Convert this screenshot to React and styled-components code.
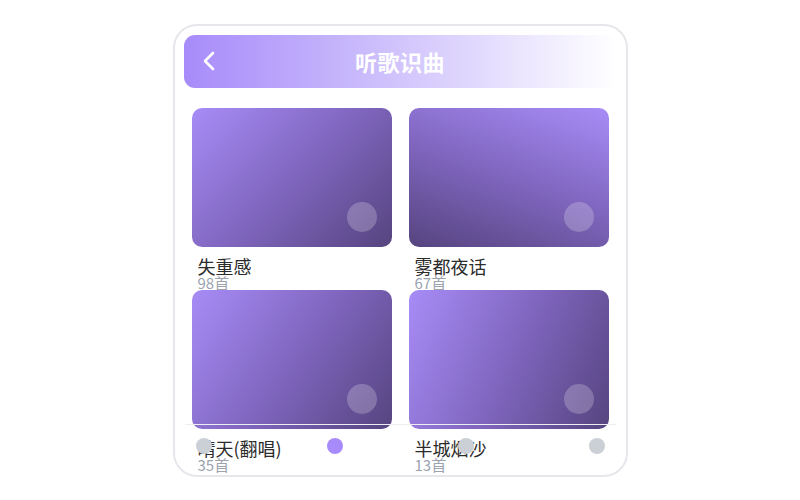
import React from "react";
import styled, { createGlobalStyle } from "styled-components";

const Global = createGlobalStyle`
  html, body { margin: 0; padding: 0; background: #ffffff; }
  body {
    font-family: "Noto Sans CJK SC", "Noto Sans", sans-serif;
  }
`;

const Page = styled.div`
  width: 800px;
  height: 500px;
  display: flex;
  align-items: center;
  justify-content: center;
`;

const Phone = styled.div`
  position: relative;
  box-sizing: border-box;
  width: 455px;
  height: 453px;
  border: 2px solid #e6e7eb;
  border-radius: 24px;
  padding: 9px;
  overflow: hidden;
  background: #ffffff;
  display: flex;
  flex-direction: column;
`;

const Header = styled.div`
  flex: none;
  height: 53px;
  border-radius: 11px;
  background: linear-gradient(90deg, #a78bfa 0%, #cdbffc 45%, #ffffff 100%);
  display: grid;
  grid-template-columns: 1fr auto 1fr;
  align-items: center;
`;

const Back = styled.button`
  justify-self: start;
  margin-left: 17px;
  width: 16px;
  height: 24px;
  padding: 0;
  border: none;
  background: none;
  display: flex;
  align-items: center;
  justify-content: center;
  cursor: pointer;
`;

const Title = styled.h1`
  margin: 0;
  font-size: 22px;
  line-height: 30px;
  font-weight: 700;
  color: #ffffff;
  letter-spacing: 0.5px;
`;

const Grid = styled.div`
  flex: none;
  margin-top: 20px;
  padding: 0 8px;
  display: grid;
  grid-template-columns: 200px 200px;
  grid-auto-rows: 182px;
  column-gap: 17px;
`;

const Item = styled.div`
  display: flex;
  flex-direction: column;
`;

const Cover = styled.div`
  position: relative;
  flex: none;
  height: 139px;
  border-radius: 10px;
  background: linear-gradient(${(p) => p.$angle}deg, #a88cf7 0%, #8066bf 50%, #56447f 100%);
`;

const Dot = styled.span`
  position: absolute;
  right: 15px;
  bottom: 15px;
  width: 30px;
  height: 30px;
  border-radius: 50%;
  background: rgba(255, 255, 255, 0.22);
`;

const Name = styled.div`
  margin-top: 10px;
  padding-left: 6px;
  font-size: 18px;
  line-height: 18px;
  font-weight: 400;
  color: #2b2b2b;
  white-space: nowrap;
`;

const Count = styled.div`
  padding-left: 6px;
  font-size: 15px;
  line-height: 16px;
  font-weight: 400;
  color: #9ca3af;
`;

const TabBar = styled.div`
  position: absolute;
  left: 10px;
  right: 10px;
  bottom: 7px;
  height: 44px;
  box-sizing: border-box;
  border-top: 1px solid #eceef2;
  padding: 0 10px 0 11px;
  display: flex;
  align-items: center;
  justify-content: space-between;
`;

const TabDot = styled.span`
  width: 16px;
  height: 16px;
  border-radius: 50%;
  background: ${(p) => (p.$active ? "#a78bfa" : "#cbd0d6")};
`;

const songs = [
  { name: "失重感", count: "98首", angle: 135 },
  { name: "雾都夜话", count: "67首", angle: 200 },
  { name: "晴天(翻唱)", count: "35首", angle: 125 },
  { name: "半城烟沙", count: "13首", angle: 115 },
];

export default function App() {
  return (
    <>
      <Global />
      <Page>
        <Phone>
          <Header>
            <Back aria-label="返回">
              <svg width="12" height="20" viewBox="0 0 12 20" fill="none">
                <path
                  d="M10 2 L2 10 L10 18"
                  stroke="#ffffff"
                  strokeWidth="2.6"
                  strokeLinecap="round"
                  strokeLinejoin="round"
                />
              </svg>
            </Back>
            <Title>听歌识曲</Title>
            <span />
          </Header>
          <Grid>
            {songs.map((s) => (
              <Item key={s.name}>
                <Cover $angle={s.angle}>
                  <Dot />
                </Cover>
                <Name>{s.name}</Name>
                <Count>{s.count}</Count>
              </Item>
            ))}
          </Grid>
          <TabBar>
            <TabDot />
            <TabDot $active />
            <TabDot />
            <TabDot />
          </TabBar>
        </Phone>
      </Page>
    </>
  );
}
